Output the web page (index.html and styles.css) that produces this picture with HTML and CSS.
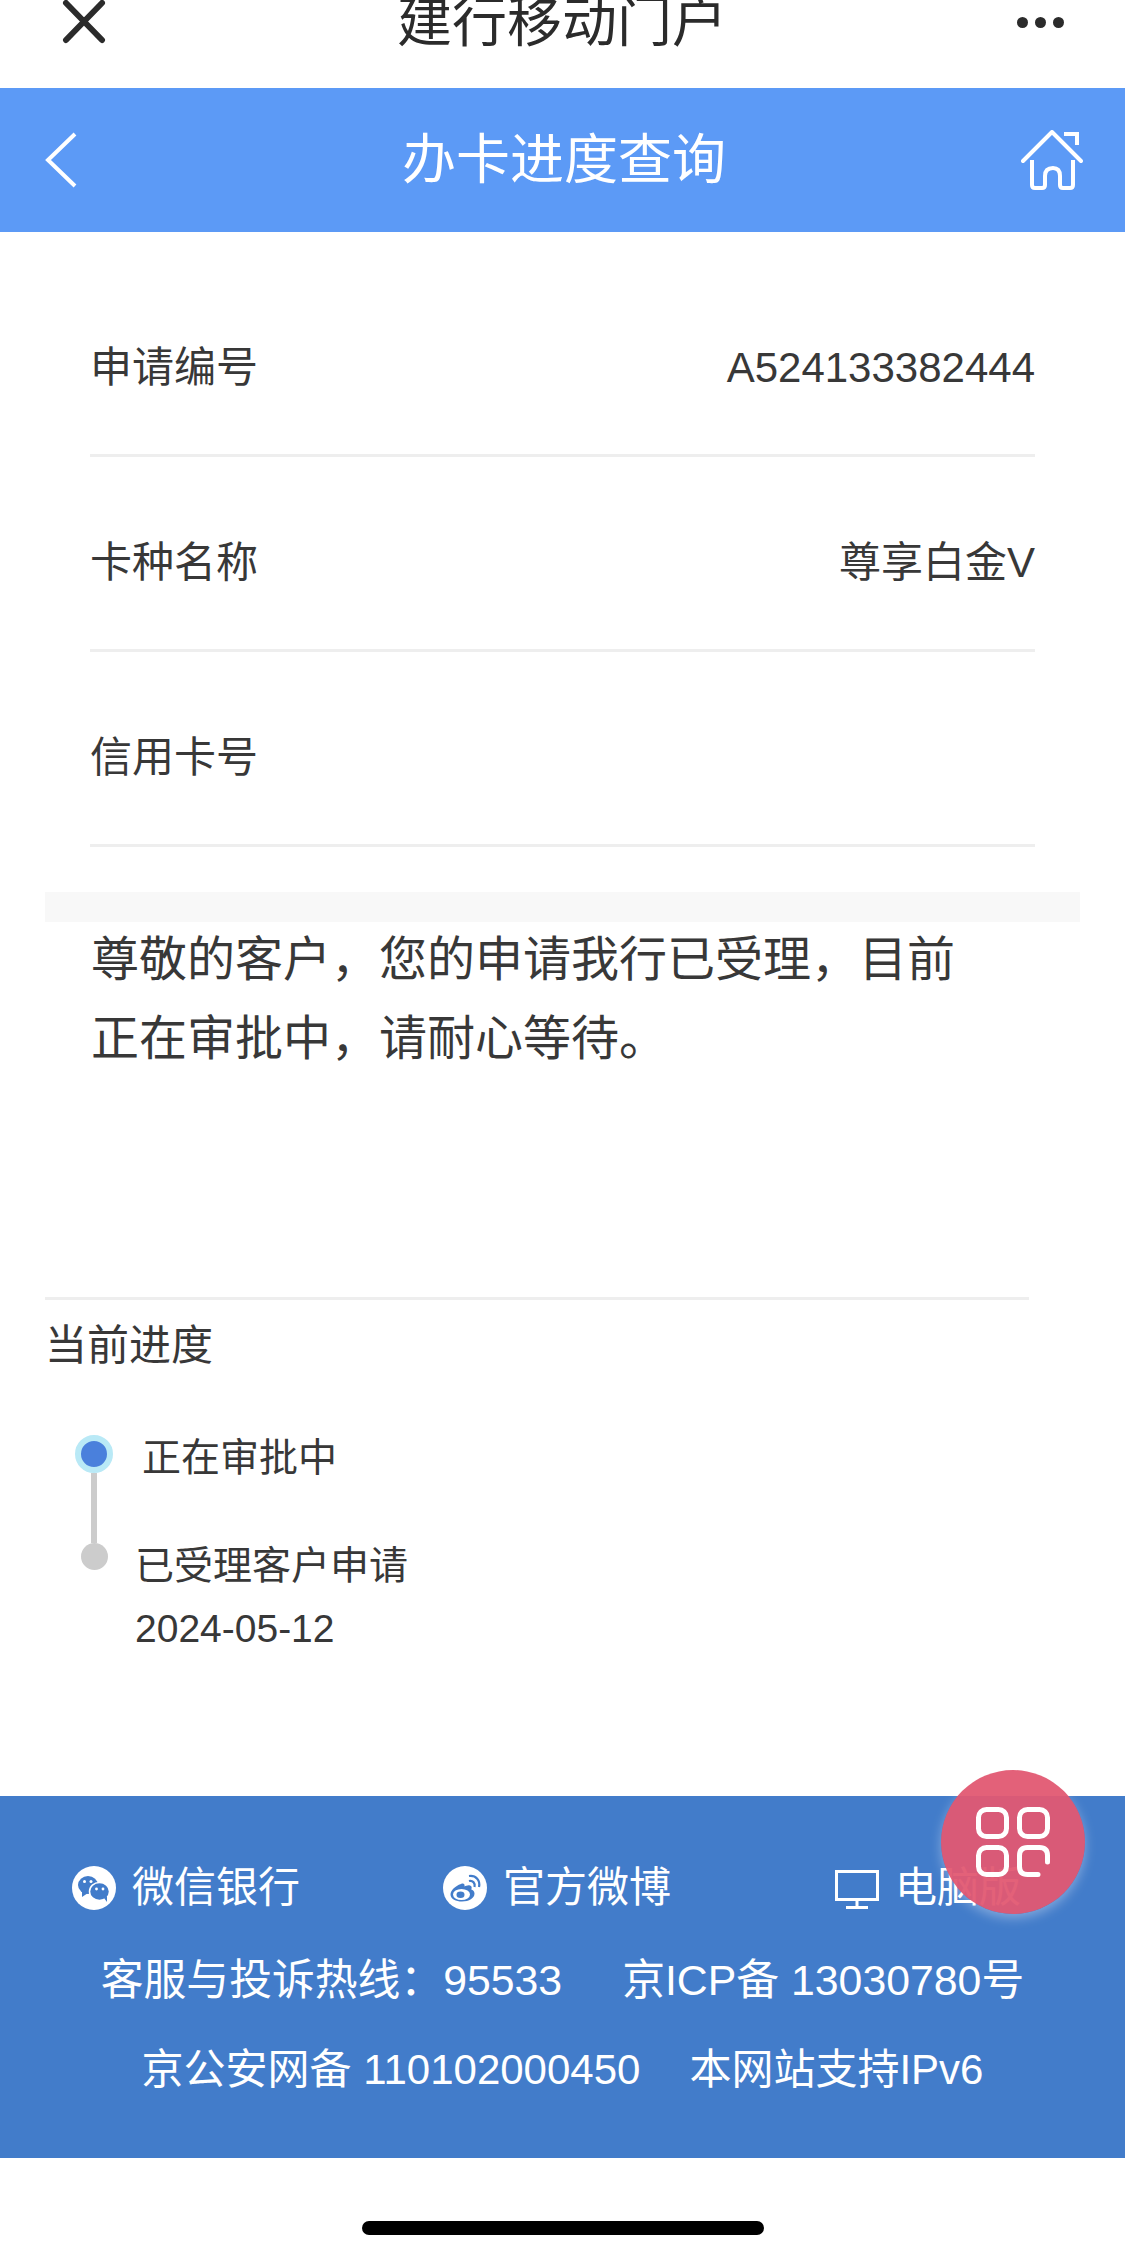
FILE: index.html
```html
<!DOCTYPE html>
<html lang="zh">
<head>
    <meta charset="utf-8">
    <title>办卡进度查询</title>
    <link rel="stylesheet" href="styles.css">
</head>
<body>
    <div class="top-bar">
        <svg class="top-close" viewBox="0 0 47 44"><path d="M6 3 L42 40 M42 3 L6 40" fill="none" stroke="#2b2b2b" stroke-width="6" stroke-linecap="round"/></svg>
        <div class="top-title">建行移动门户</div>
        <div class="top-more"><span></span><span></span><span></span></div>
    </div>

    <div class="nav-bar">
        <svg class="nav-back" viewBox="0 0 32 56"><path d="M30 2 L3 28 L30 54" fill="none" stroke="#fff" stroke-width="4"/></svg>
        <div class="nav-title">办卡进度查询</div>
        <svg class="nav-home" viewBox="0 0 62 60">
            <path d="M2 31 L31 2 L60 31" fill="none" stroke="#fff" stroke-width="4" stroke-linecap="round" stroke-linejoin="round"/>
            <path d="M43 4 H56 V15" fill="none" stroke="#fff" stroke-width="4"/>
            <path d="M11 30 V55 Q11 58 14 58 H21 Q24 58 24 55 V46 Q24 38 32 38 Q39 38 39 46 V55 Q39 58 42 58 H49 Q52 58 52 55 V30" fill="none" stroke="#fff" stroke-width="4"/>
        </svg>
    </div>

    <div class="info">
        <div class="info-row"><span>申请编号</span><span>A524133382444</span></div>
        <div class="info-row"><span>卡种名称</span><span>尊享白金V</span></div>
        <div class="info-row"><span>信用卡号</span><span></span></div>
    </div>

    <div class="band"></div>
    <p class="message">尊敬的客户，您的申请我行已受理，目前正在审批中，请耐心等待。</p>

    <div class="progress">
        <div class="progress-title">当前进度</div>
        <div class="timeline">
            <div class="marks">
                <span class="dot-on"></span>
                <span class="mark-line"></span>
                <span class="dot-off"></span>
            </div>
            <div class="steps">
                <div class="step-now">正在审批中</div>
                <div class="step-done">已受理客户申请</div>
                <div class="step-date">2024-05-12</div>
            </div>
        </div>
    </div>

    <div class="footer">
        <div class="foot-links">
            <div class="foot-link">
                <svg class="foot-icon" viewBox="0 0 44 44">
                    <circle cx="22" cy="22" r="22" fill="#fff"/>
                    <ellipse cx="16" cy="19" rx="10" ry="9" fill="#427cca"/>
                    <path d="M10 25 L10 31 L16 27 Z" fill="#427cca"/>
                    <ellipse cx="27.500" cy="25.500" rx="10" ry="9" fill="#427cca" stroke="#fff" stroke-width="1.500"/>
                    <path d="M32 32 L35 36 L35 30 Z" fill="#427cca"/>
                    <circle cx="12.500" cy="15.500" r="1.500" fill="#fff"/>
                    <circle cx="19" cy="15.500" r="1.500" fill="#fff"/>
                    <circle cx="24.500" cy="23" r="1.400" fill="#fff"/>
                    <circle cx="31" cy="23" r="1.400" fill="#fff"/>
                </svg>
                <span>微信银行</span>
            </div>
            <div class="foot-link">
                <svg class="foot-icon" viewBox="0 0 44 44">
                    <circle cx="22" cy="22" r="22" fill="#fff"/>
                    <path d="M18 18 C12 20 7.500 24.500 7.500 28.500 C7.500 33 13 35.500 19 35.500 C26 35.500 31.500 32 31.500 27.500 C31.500 25.300 29.800 24 28.300 23.500 C29.300 21 28.300 19.500 26.300 19.300 C24.500 19.100 22.500 20 21.500 20.500 C22 18 20.500 17 18 18 Z" fill="#427cca"/>
                    <ellipse cx="18.500" cy="28.500" rx="8.500" ry="5.500" fill="#fff"/>
                    <ellipse cx="17.500" cy="28.800" rx="4" ry="3.200" fill="#427cca"/>
                    <path d="M26 15 C29.500 14 32.500 17 31.500 21 M26 10 C33 9 37.500 14.500 36 21" fill="none" stroke="#427cca" stroke-width="2.200"/>
                </svg>
                <span>官方微博</span>
            </div>
            <div class="foot-link">
                <svg class="foot-icon" viewBox="0 0 44 44">
                    <path d="M1.500 5.500 H42.500 V33.500 H1.500 Z M22 33.500 V41 M11 41.500 H33" fill="none" stroke="#fff" stroke-width="3"/>
                </svg>
                <span>电脑版</span>
            </div>
        </div>
        <div class="foot-line"><span>客服与投诉热线：95533</span><span>京ICP备 13030780号</span></div>
        <div class="foot-line foot-line-last"><span>京公安网备 110102000450</span><span>本网站支持IPv6</span></div>
    </div>

    <div class="home-area"><div class="home-indicator"></div></div>

    <div class="fab">
        <svg class="fab-icon" viewBox="0 0 74 70">
            <rect x="2.500" y="2.500" width="28" height="27" rx="8" fill="none" stroke="#fff" stroke-width="5"/>
            <rect x="43.500" y="2.500" width="28" height="27" rx="8" fill="none" stroke="#fff" stroke-width="5"/>
            <rect x="2.500" y="40.500" width="28" height="27" rx="8" fill="none" stroke="#fff" stroke-width="5"/>
            <path d="M62 67.500 H51.500 Q43.500 67.500 43.500 59.500 V48.500 Q43.500 40.500 51.500 40.500 H63.500 Q71.500 40.500 71.500 48.500 V55" fill="none" stroke="#fff" stroke-width="5" stroke-linecap="round"/>
        </svg>
    </div>
</body>
</html>
```

FILE: styles.css
```css
* {
    box-sizing: border-box;
}
body {
    margin: 0;
    padding: 0;
    background: #fff;
    color: #383838;
    font-family: "Liberation Sans", "Noto Sans CJK SC", sans-serif;
    overflow: hidden;
    height: 2260px;
    position: relative;
}

.top-bar {
    height: 88px;
    display: grid;
    grid-template-columns: 1fr auto 1fr;
    align-items: start;
    padding: 0 61px 0 60px;
    overflow: hidden;
}
.top-close {
    width: 47px;
    height: 44px;
}
.top-title {
    font-size: 55px;
    line-height: 44px;
    color: #2b2b2b;
}
.top-more {
    justify-self: end;
    display: flex;
    gap: 7px;
    padding-top: 17px;
}
.top-more span {
    width: 11px;
    height: 11px;
    border-radius: 50%;
    background: #2b2b2b;
}

.nav-bar {
    height: 144px;
    background: #5c9af6;
    display: grid;
    grid-template-columns: 1fr auto 1fr;
    align-items: center;
    padding: 0 42px 0 45px;
}
.nav-back {
    width: 32px;
    height: 56px;
}
.nav-title {
    font-size: 54px;
    line-height: 60px;
    color: #fff;
}
.nav-home {
    justify-self: end;
    width: 62px;
    height: 60px;
}

.info {
    margin: 30px 90px 0 90px;
}
.info-row {
    height: 195px;
    padding-top: 76px;
    display: flex;
    justify-content: space-between;
    font-size: 42px;
    line-height: 60px;
    border-bottom: 3px solid #eee;
}

.band {
    height: 30px;
    margin: 45px 45px 0;
    background: #f8f8f8;
}
.message {
    width: 880px;
    margin: -2px 0 0 91px;
    font-size: 48px;
    line-height: 79px;
}

.progress {
    margin: 219px 96px 0 45px;
    border-top: 3px solid #eee;
}
.progress-title {
    margin-top: 16px;
    font-size: 42px;
    line-height: 60px;
}
.timeline {
    display: flex;
    margin: 59px 0 0 30px;
}
.marks {
    width: 38px;
    display: flex;
    flex-direction: column;
    align-items: center;
}
.dot-on {
    width: 38px;
    height: 38px;
    border-radius: 50%;
    background: #4a80dc;
    border: 6px solid #b9e9f6;
}
.mark-line {
    width: 6px;
    height: 70px;
    background: #ccc;
}
.dot-off {
    width: 27px;
    height: 27px;
    border-radius: 50%;
    background: #ccc;
}
.steps {
    font-size: 39px;
    margin-left: 22px;
}
.step-now {
    margin: -2px 0 0 7px;
    line-height: 50px;
}
.step-done {
    margin-top: 58px;
    line-height: 50px;
}
.step-date {
    margin-top: 13px;
    line-height: 50px;
}

.footer {
    margin-top: 142px;
    height: 362px;
    background: #427cca;
    color: #fff;
    font-size: 42px;
    padding-top: 70px;
}
.foot-links {
    display: grid;
    grid-template-columns: 371px 392px auto;
    padding-left: 72px;
}
.foot-link {
    display: flex;
    align-items: center;
    gap: 16px;
    height: 44px;
    line-height: 42px;
}
.foot-icon {
    width: 44px;
    height: 44px;
}
.foot-line {
    display: flex;
    justify-content: center;
    gap: 60px;
    margin-top: 48px;
    font-size: 42.800px;
    line-height: 44px;
}
.foot-line-last {
    gap: 49px;
    margin-top: 46px;
    font-size: 42px;
}

.home-area {
    height: 103px;
    padding-top: 63px;
}
.home-indicator {
    width: 402px;
    height: 14px;
    margin: 0 auto;
    border-radius: 7px;
    background: #000;
}

.fab {
    position: absolute;
    left: 941px;
    top: 1770px;
    width: 144px;
    height: 144px;
    border-radius: 50%;
    background: rgba(226, 88, 114, 0.95);
    box-shadow: 0 4px 12px rgba(255, 255, 255, 0.35);
    display: flex;
    align-items: center;
    justify-content: center;
}
.fab-icon {
    width: 74px;
    height: 70px;
}
```
